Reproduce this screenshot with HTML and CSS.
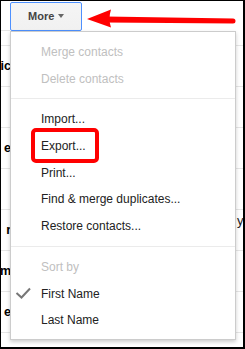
FILE: index.html
```html
<!DOCTYPE html>
<html lang="en">
<head>
    <meta charset="UTF-8">
    <meta name="viewport" content="width=device-width, initial-scale=1.0">
    <title>Contacts - More menu</title>
    <link rel="stylesheet" href="styles.css">
</head>
<body>
    <div class="frame">
        <div class="toolbar"><span class="toolbar-edge"></span></div>

        <div class="list">
            <div class="row row-head"></div>
            <div class="row"><span class="name">ic</span><span class="mid"></span><span class="side"></span></div>
            <div class="row"><span class="name"></span><span class="mid"></span><span class="side"></span></div>
            <div class="row"><span class="name">e</span><span class="mid"></span><span class="side"></span></div>
            <div class="row"><span class="name"></span><span class="mid"></span><span class="side"></span></div>
            <div class="row"><span class="name">r</span><span class="mid"></span><span class="side side-top">y</span></div>
            <div class="row"><span class="name">m</span><span class="mid"></span><span class="side"></span></div>
            <div class="row"><span class="name">e</span><span class="mid"></span><span class="side"></span></div>
            <div class="row row-last"></div>
        </div>

        <button class="more-btn">More<span class="caret"></span></button>

        <svg class="arrow" viewBox="0 0 245 40" width="245" height="40">
            <path d="M87 19 L111 9.5 Q108 19 111 27.5 Z" fill="#f00"/>
            <path d="M106 16.5 L233 18.5 A2.5 2.5 0 0 1 233 23.5 L106 22.5 Z" fill="#f00"/>
        </svg>

        <div class="menu">
            <div class="item disabled"><span class="gutter"></span>Merge contacts</div>
            <div class="item disabled"><span class="gutter"></span>Delete contacts</div>
            <div class="sep"></div>
            <div class="item"><span class="gutter"></span>Import...</div>
            <div class="item"><span class="gutter"></span>Export...</div>
            <div class="item"><span class="gutter"></span>Print...</div>
            <div class="item"><span class="gutter"></span>Find &amp; merge duplicates...</div>
            <div class="item"><span class="gutter"></span>Restore contacts...</div>
            <div class="sep"></div>
            <div class="item disabled"><span class="gutter"></span>Sort by</div>
            <div class="item">
                <span class="gutter">
                    <svg viewBox="0 0 30 27" width="30" height="27">
                        <polyline points="5.5,12 10.5,16.5 19,7.5" fill="none" stroke="#777" stroke-width="2"/>
                    </svg>
                </span>First Name
            </div>
            <div class="item"><span class="gutter"></span>Last Name</div>
        </div>

        <div class="highlight"></div>
    </div>
</body>
</html>
```

FILE: styles.css
```css
body {
    margin: 0;
    font-family: 'Liberation Sans', Arial, sans-serif;
    background: #fff;
}

.frame {
    position: relative;
    width: 245px;
    height: 349px;
    box-sizing: border-box;
    border-style: solid;
    border-color: #000;
    border-width: 1px 2px 2px 1px;
    overflow: hidden;
    background: #fff;
}

.toolbar {
    height: 29px;
    display: flex;
    align-items: flex-end;
}

.toolbar-edge {
    width: 9px;
    height: 1px;
    margin-bottom: -1px;
    background: #e5e5e5;
}

.toolbar + .list {
    margin-top: 1px;
}

.row {
    display: flex;
    height: 40px;
    border-bottom: 1px solid #e5e5e5;
}

.row-head {
    height: 14px;
}

.row-last {
    border-bottom: none;
}

.name {
    width: 10px;
    display: flex;
    justify-content: flex-end;
    white-space: nowrap;
    padding-top: 12px;
    line-height: 16px;
    font-size: 12.5px;
    font-weight: bold;
    color: #000;
}

.mid {
    flex: 1;
}

.side {
    width: 6px;
    white-space: nowrap;
    line-height: 16px;
    font-size: 13px;
    color: #222;
}

.side-top {
    padding-top: 3px;
}

.more-btn {
    position: absolute;
    left: 9px;
    top: 1px;
    width: 72px;
    height: 29px;
    box-sizing: border-box;
    display: flex;
    align-items: center;
    padding: 0 0 0 17px;
    border: 1px solid #4d90fe;
    border-radius: 2px;
    background: linear-gradient(#f5f5f5, #f1f1f1);
    font-family: 'Liberation Sans', Arial, sans-serif;
    font-size: 11px;
    font-weight: bold;
    line-height: 27px;
    color: #444;
}

.caret {
    margin-left: 4px;
    margin-top: -2px;
    width: 0;
    height: 0;
    border-left: 3.5px solid transparent;
    border-right: 3.5px solid transparent;
    border-top: 4px solid #666;
}

.arrow {
    position: absolute;
    left: -1px;
    top: -1px;
}

.menu {
    position: absolute;
    left: 9px;
    top: 30px;
    width: 226px;
    box-sizing: border-box;
    padding: 7px 0 5px;
    background: #fff;
    border: 1px solid rgba(0, 0, 0, 0.2);
    box-shadow: 0 2px 4px rgba(0, 0, 0, 0.2);
    font-size: 12px;
    color: #222;
}

.item {
    display: flex;
    height: 26.7px;
    line-height: 26.7px;
    white-space: nowrap;
}

.item.disabled {
    color: #c0c0c0;
}

.gutter {
    width: 30px;
    flex-shrink: 0;
    display: flex;
}

.sep {
    height: 1px;
    margin: 6px 0 7px;
    background: #ebebeb;
}

.highlight {
    position: absolute;
    left: 30px;
    top: 127px;
    width: 68px;
    height: 35px;
    box-sizing: border-box;
    border: 4px solid #f00;
    border-radius: 5px;
}
```
